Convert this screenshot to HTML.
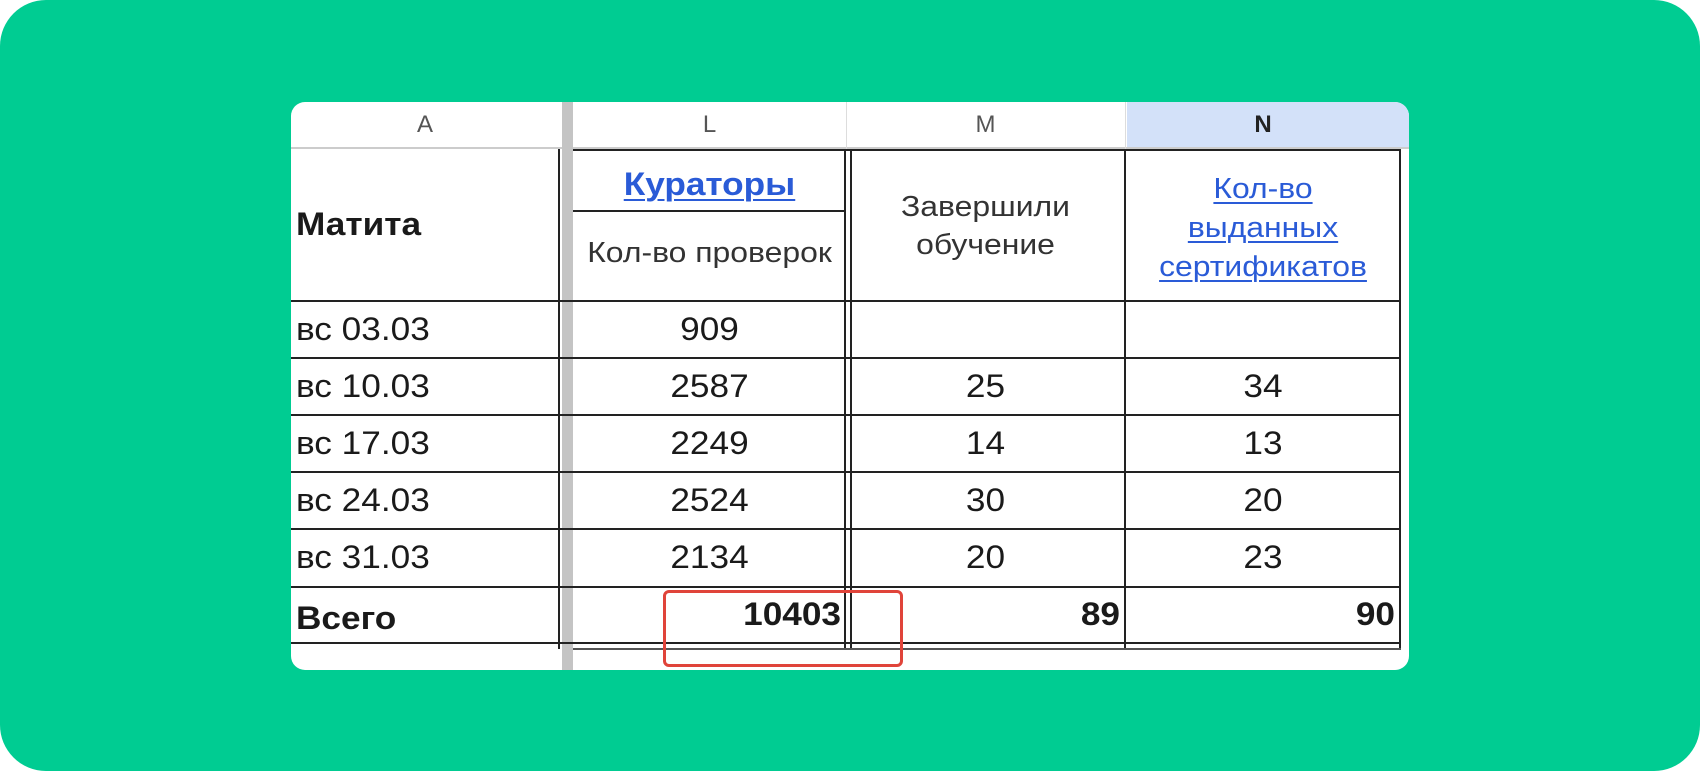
<!DOCTYPE html>
<html><head><meta charset="utf-8"><style>
body{margin:0;width:1700px;height:771px;background:#fff;overflow:hidden;position:relative;font-family:"Liberation Sans",sans-serif}
.g{position:absolute;left:0;top:0;width:1700px;height:771px;background:#00cc92;border-radius:46px}
.card{position:absolute;left:291px;top:102px;width:1118px;height:568px;background:#fff;border-radius:14px;overflow:hidden}
.a{position:absolute}
.h{background:#222}
.t{position:absolute;color:#1a1a1a;font-size:32px;transform:scaleX(1.1);white-space:nowrap}
.c{text-align:center;transform-origin:center}
.l{transform-origin:left}
.r{text-align:right;transform-origin:right}
.lk{color:#2a5bd7;text-decoration:underline;text-decoration-thickness:2px;text-underline-offset:4px}
.col{position:absolute;top:0;height:45px;line-height:45px;color:#555;font-size:24px;text-align:center}
</style></head><body>
<div class="g"></div>
<div class="card">
 <div class="a" style="left:836px;top:0;width:282px;height:45px;background:#d3e1f9"></div>
 <div class="col" style="left:0;width:268px">A</div>
 <div class="col" style="left:282px;width:273px">L</div>
 <div class="col" style="left:555px;width:279px">M</div>
 <div class="col" style="left:834px;width:276px;color:#222;font-weight:bold">N</div>
 <div class="a" style="left:0;top:45px;width:1118px;height:2px;background:#ccc"></div>
 <div class="a" style="left:271px;top:0;width:11px;height:568px;background:#c4c4c4"></div>
 <div class="a" style="left:555px;top:0;width:1px;height:47px;background:#ddd"></div>
 <div class="a" style="left:834px;top:0;width:1px;height:47px;background:#ddd"></div>
 <div class="a h" style="left:267px;top:47px;width:2px;height:500px"></div>
 <div class="a h" style="left:553px;top:47px;width:2px;height:500px"></div>
 <div class="a h" style="left:559px;top:47px;width:2px;height:500px"></div>
 <div class="a h" style="left:833px;top:47px;width:2px;height:500px"></div>
 <div class="a h" style="left:1108px;top:47px;width:2px;height:500px"></div>
 <div class="a h" style="left:282px;top:47px;width:828px;height:2px"></div>
 <div class="a h" style="left:282px;top:108px;width:273px;height:2px"></div>
 <div class="a h" style="left:0;top:198px;width:1110px;height:2px"></div>
 <div class="a h" style="left:0;top:255px;width:1110px;height:2px"></div>
 <div class="a h" style="left:0;top:312px;width:1110px;height:2px"></div>
 <div class="a h" style="left:0;top:369px;width:1110px;height:2px"></div>
 <div class="a h" style="left:0;top:426px;width:1110px;height:2px"></div>
 <div class="a h" style="left:0;top:484px;width:1110px;height:2px"></div>
 <div class="a h" style="left:0;top:540px;width:1110px;height:2px"></div>
 <div class="a" style="left:282px;top:546px;width:828px;height:2px;background:#555"></div>
 <div class="t l" style="left:5px;top:104px;font-weight:bold">Матита</div>
 <div class="t c lk" style="left:282px;width:273px;top:64px;font-weight:bold">Кураторы</div>
 <div class="t c" style="left:282px;width:273px;top:135px;font-size:29px;color:#333">Кол-во проверок</div>
 <div class="t c" style="left:555px;width:279px;top:86px;font-size:29px;line-height:38px;color:#333;white-space:normal">Завершили<br>обучение</div>
 <div class="t c lk" style="left:834px;width:276px;top:68px;font-size:29px;line-height:39px">Кол-во<br>выданных<br>сертификатов</div>
 <div class="t l" style="left:5px;top:209px">вс 03.03</div><div class="t c" style="left:282px;width:273px;top:209px">909</div>
 <div class="t l" style="left:5px;top:266px">вс 10.03</div><div class="t c" style="left:282px;width:273px;top:266px">2587</div><div class="t c" style="left:555px;width:279px;top:266px">25</div><div class="t c" style="left:834px;width:276px;top:266px">34</div>
 <div class="t l" style="left:5px;top:323px">вс 17.03</div><div class="t c" style="left:282px;width:273px;top:323px">2249</div><div class="t c" style="left:555px;width:279px;top:323px">14</div><div class="t c" style="left:834px;width:276px;top:323px">13</div>
 <div class="t l" style="left:5px;top:380px">вс 24.03</div><div class="t c" style="left:282px;width:273px;top:380px">2524</div><div class="t c" style="left:555px;width:279px;top:380px">30</div><div class="t c" style="left:834px;width:276px;top:380px">20</div>
 <div class="t l" style="left:5px;top:437px">вс 31.03</div><div class="t c" style="left:282px;width:273px;top:437px">2134</div><div class="t c" style="left:555px;width:279px;top:437px">20</div><div class="t c" style="left:834px;width:276px;top:437px">23</div>
 <div class="t l" style="left:5px;top:498px;font-weight:bold">Всего</div>
 <div class="t r" style="left:282px;width:268px;top:494px;font-weight:bold">10403</div>
 <div class="t r" style="left:555px;width:274px;top:494px;font-weight:bold">89</div>
 <div class="t r" style="left:834px;width:270px;top:494px;font-weight:bold">90</div>
 <div class="a" style="left:372px;top:488px;width:234px;height:71px;border:3px solid #e0443a;border-radius:6px"></div>
</div>
</body></html>
